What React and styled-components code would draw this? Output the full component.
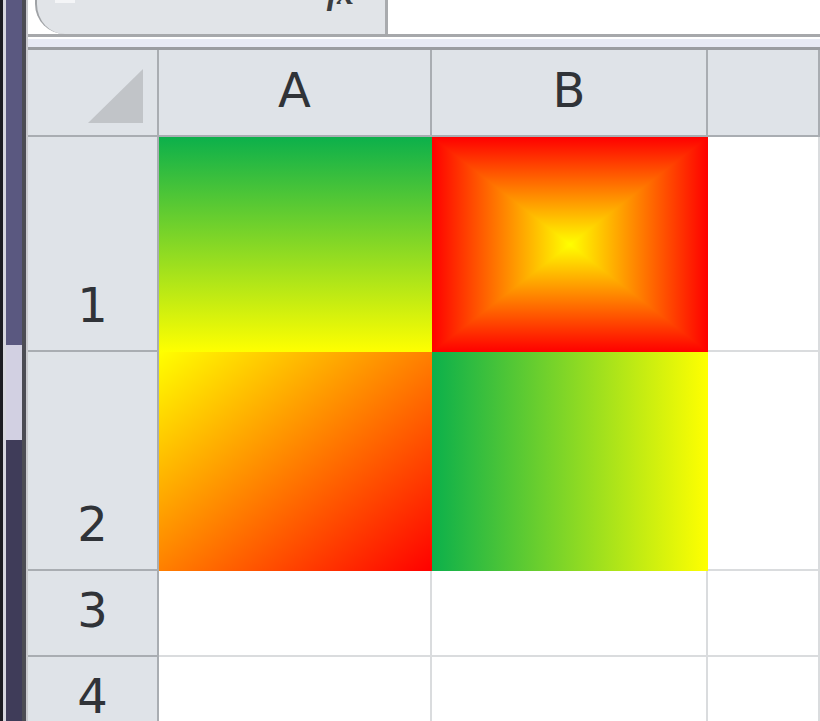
import React from "react";
import styled, { createGlobalStyle } from "styled-components";

const GlobalStyle = createGlobalStyle`
  html, body { margin: 0; padding: 0; background: #ffffff; overflow: hidden; }
  #root { width: 820px; height: 721px; }
`;

const Page = styled.div`
  display: flex;
  width: 820px;
  height: 721px;
  overflow: hidden;
  background: #ffffff;
`;

/* ---------- left window frame ---------- */
const Strip = styled.div`
  display: flex;
  flex: 0 0 28px;
  height: 100%;
`;
const StripBand = styled.div`
  flex: 0 0 ${(p) => p.$w}px;
  background: ${(p) => p.$c};
`;
const StripRail = styled.div`
  flex: 0 0 16px;
  display: flex;
  flex-direction: column;
`;
const RailSegment = styled.div`
  flex: ${(p) => (p.$h ? `0 0 ${p.$h}px` : "1 1 auto")};
  background: ${(p) => p.$c};
`;

/* ---------- main area ---------- */
const Main = styled.div`
  flex: 1 1 auto;
  display: flex;
  flex-direction: column;
  min-width: 0;
`;

const FormulaRow = styled.div`
  flex: 0 0 34px;
  display: flex;
  padding-left: 7px;
  border-bottom: 3px solid #a6a8ab;
  background: #ffffff;
`;
const FormulaBox = styled.div`
  position: relative;
  width: 353px;
  display: flex;
  justify-content: flex-end;
  align-items: flex-start;
  padding-right: 32px;
  box-sizing: border-box;
  background: #e1e4e8;
  border-left: 2px solid #9fa2a6;
  border-right: 3px solid #a9abae;
  border-bottom-left-radius: 30px;
  overflow: hidden;
`;
const TabMark = styled.span`
  position: absolute;
  left: 18px;
  top: 0;
  width: 20px;
  height: 3px;
  background: #f4f5f7;
`;
const Fx = styled.span`
  font-family: "Liberation Serif", "DejaVu Serif", serif;
  font-style: italic;
  font-weight: 700;
  font-size: 34px;
  line-height: 34px;
  color: #3a3c40;
  margin-top: -24px;
  letter-spacing: -1px;
`;

const Separator = styled.div`
  flex: 0 0 13px;
  display: flex;
  flex-direction: column;
`;
const SepBand = styled.div`
  flex: ${(p) => `0 0 ${p.$h}px`};
  background: ${(p) => p.$c};
`;

const Grid = styled.div`
  flex: 1 1 auto;
  display: grid;
  grid-template-columns: 131px 273px 276px 1fr;
  grid-template-rows: 87px 215px 219px 86px 86px;
  font-family: "DejaVu Sans", "Noto Sans", sans-serif;
  color: #303338;
`;

const HeaderCell = styled.div`
  box-sizing: border-box;
  background: #dfe3e8;
  border-right: 2px solid #a9adb2;
  border-bottom: 2px solid #a9adb2;
  display: flex;
  justify-content: center;
  align-items: ${(p) => (p.$bottom ? "flex-end" : "center")};
  padding-bottom: ${(p) => (p.$bottom ? 15 : 6)}px;
  font-size: 48px;
  line-height: 60px;
  overflow: hidden;
`;

const CornerCell = styled(HeaderCell)`
  justify-content: flex-end;
  align-items: flex-end;
  padding: 0 14px 12px 0;
`;
const CornerTriangle = styled.div`
  width: 55px;
  height: 54px;
  background: #c1c4c8;
  clip-path: polygon(100% 0, 100% 100%, 0 100%);
`;

const Cell = styled.div`
  box-sizing: border-box;
  border-right: 2px solid ${(p) => (p.$fill ? "transparent" : "#dadcde")};
  border-bottom: 2px solid ${(p) => (p.$fill ? "transparent" : "#dadcde")};
  background: ${(p) => p.$fill || "#ffffff"};
  background-origin: border-box;
  background-blend-mode: ${(p) => p.$blend || "normal"};
`;

const fills = {
  A1: "linear-gradient(to bottom, #0cb04b 0%, #ffff00 100%)",
  B1:
    "linear-gradient(to right, #ff0000 0%, #ffff00 50%, #ff0000 100%), linear-gradient(to bottom, #ff0000 0%, #ffff00 50%, #ff0000 100%)",
  A2: "linear-gradient(to bottom right, #ffff00 0%, #ff0000 100%)",
  B2: "linear-gradient(to right, #0cb04b 0%, #ffff00 100%)",
};

const columns = ["A", "B", ""];
const rows = [
  { n: "1", cells: [fills.A1, fills.B1, null], blend: [null, "darken", null] },
  { n: "2", cells: [fills.A2, fills.B2, null], blend: [null, null, null] },
  { n: "3", cells: [null, null, null], blend: [null, null, null] },
  { n: "4", cells: [null, null, null], blend: [null, null, null] },
];

export default function App() {
  return (
    <>
      <GlobalStyle />
      <Page>
        <Strip>
          <StripBand $w={3} $c="#1c1c22" />
          <StripBand $w={3} $c="#d6d6de" />
          <StripRail>
            <RailSegment $h={345} $c="#5a5880" />
            <RailSegment $h={95} $c="#d2d0e2" />
            <RailSegment $c="#3f3c59" />
          </StripRail>
          <StripBand $w={4} $c="#4c4c54" />
          <StripBand $w={2} $c="#c9c9ce" />
        </Strip>
        <Main>
          <FormulaRow>
            <FormulaBox>
              <TabMark />
              <Fx>fx</Fx>
            </FormulaBox>
          </FormulaRow>
          <Separator>
            <SepBand $h={2} $c="#ffffff" />
            <SepBand $h={8} $c="#e7eaf4" />
            <SepBand $h={3} $c="#9a9da1" />
          </Separator>
          <Grid>
            <CornerCell>
              <CornerTriangle />
            </CornerCell>
            {columns.map((c, i) => (
              <HeaderCell key={"h" + i}>{c}</HeaderCell>
            ))}
            {rows.map((r) => (
              <React.Fragment key={r.n}>
                <HeaderCell $bottom>{r.n}</HeaderCell>
                {r.cells.map((f, i) => (
                  <Cell key={r.n + i} $fill={f} $blend={r.blend[i]} />
                ))}
              </React.Fragment>
            ))}
          </Grid>
        </Main>
      </Page>
    </>
  );
}
